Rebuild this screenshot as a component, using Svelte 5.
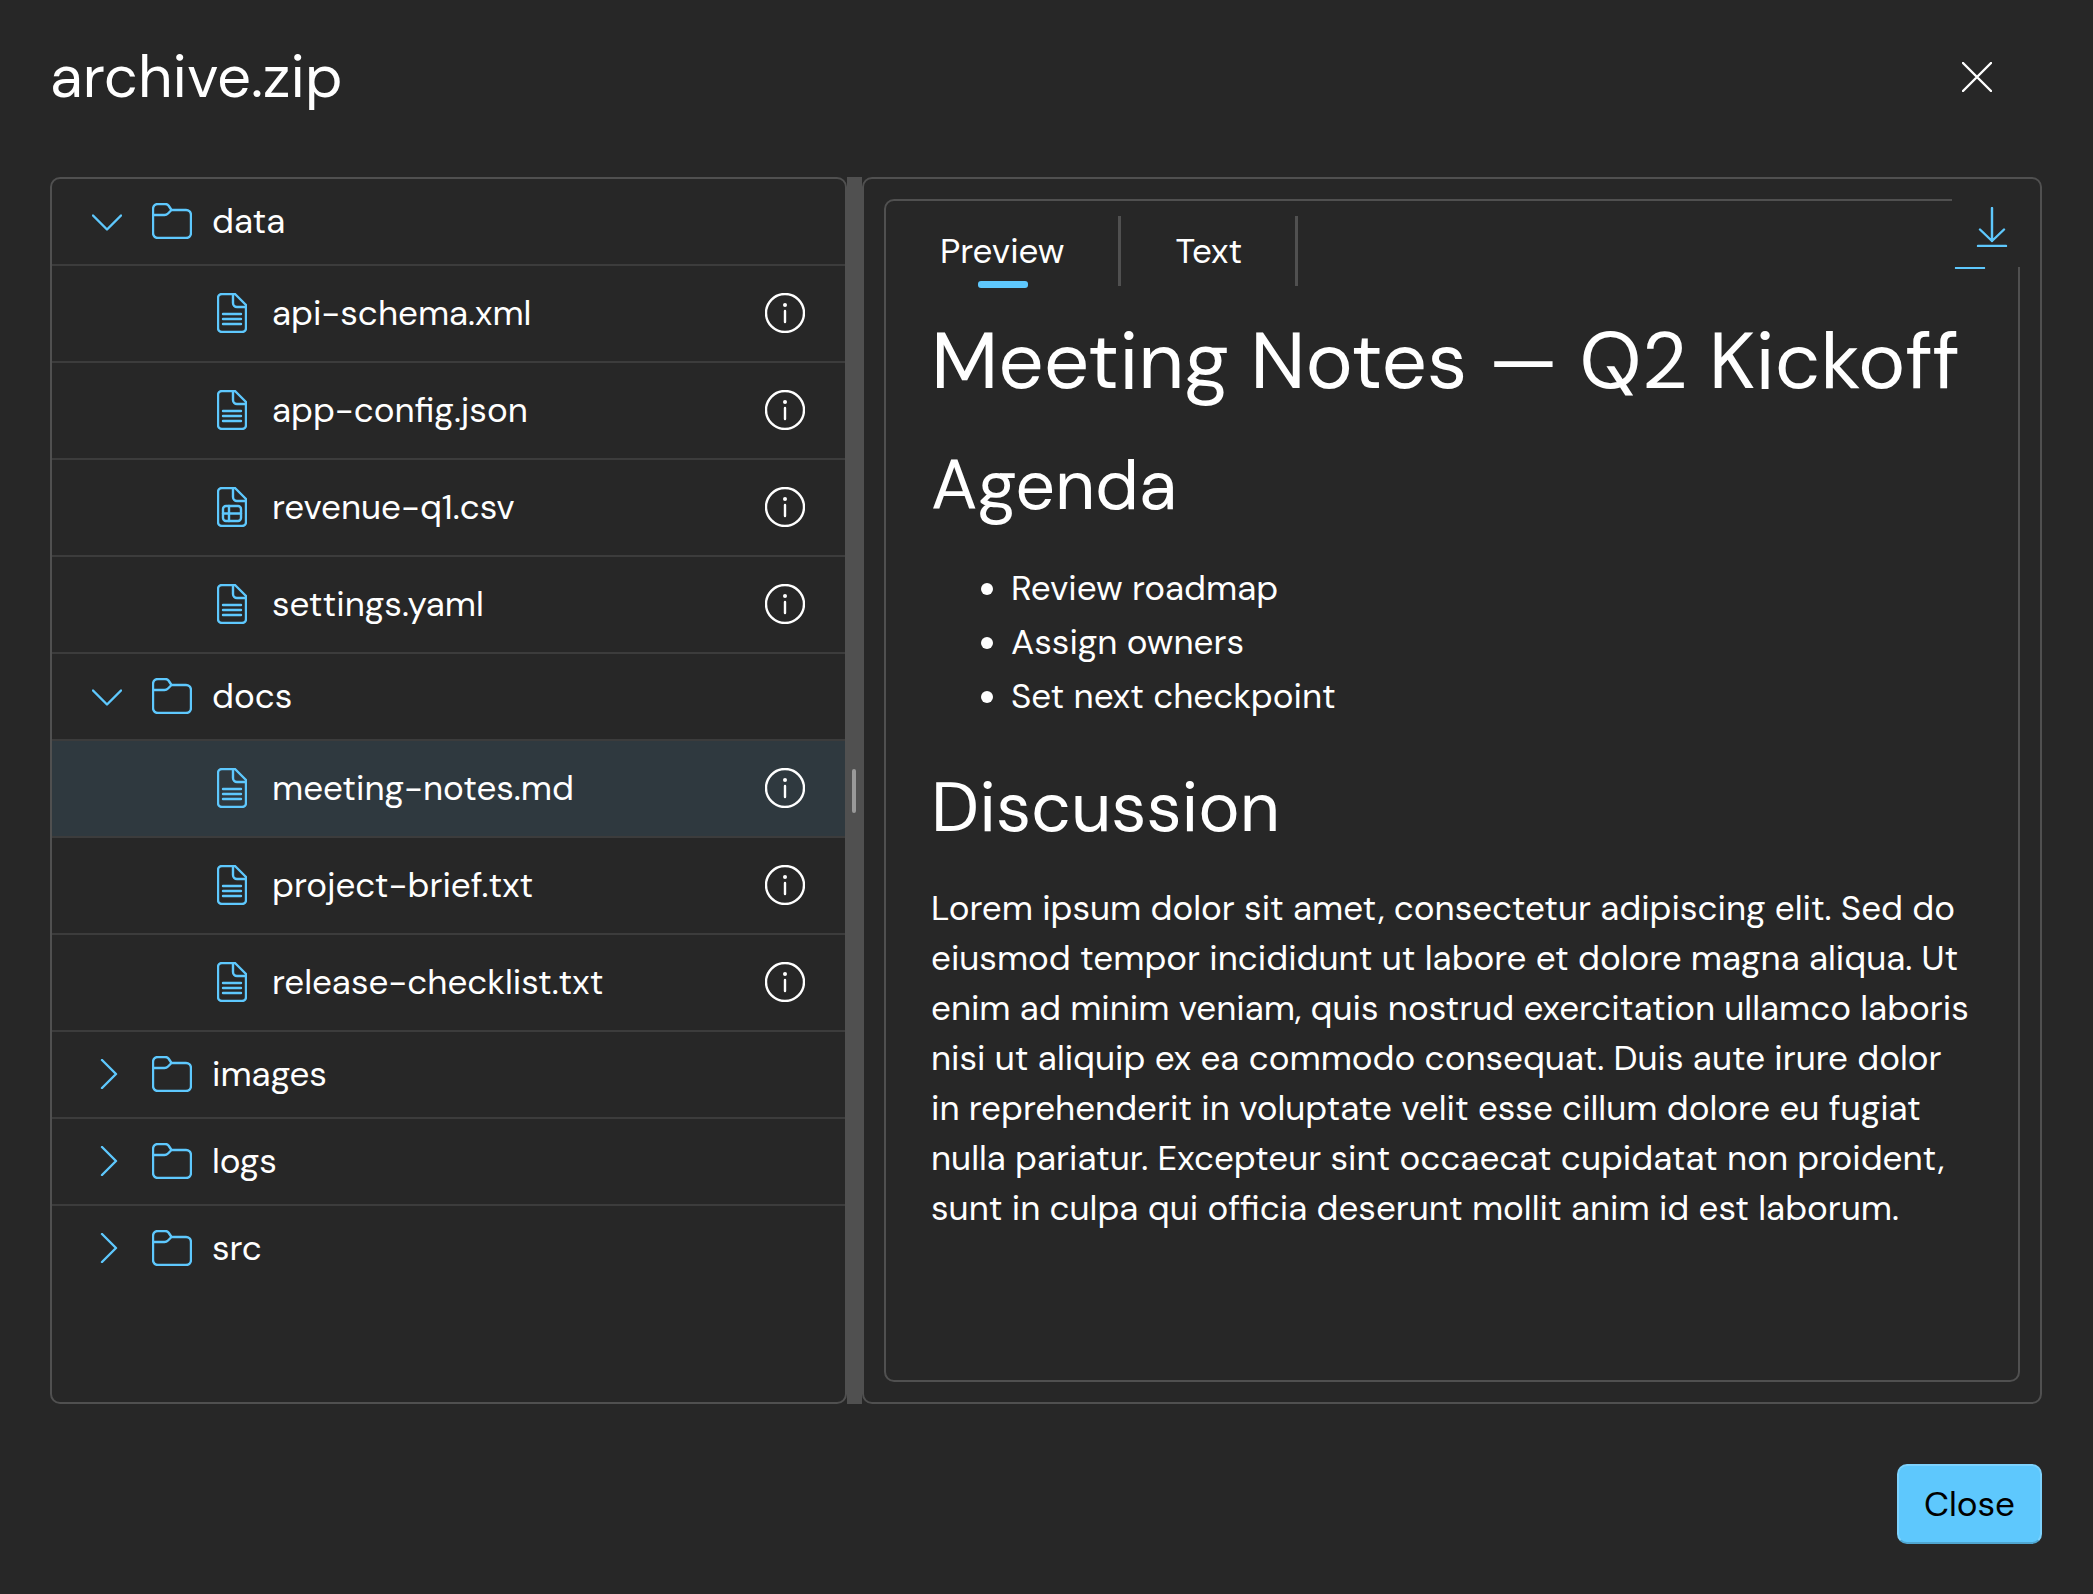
<script lang="ts">
  interface Entry {
    name: string;
    sheet?: boolean;
  }

  interface Folder {
    name: string;
    open: boolean;
    files: Entry[];
  }

  let folders: Folder[] = $state([
    {
      name: 'data',
      open: true,
      files: [
        { name: 'api-schema.xml' },
        { name: 'app-config.json' },
        { name: 'revenue-q1.csv', sheet: true },
        { name: 'settings.yaml' }
      ]
    },
    {
      name: 'docs',
      open: true,
      files: [
        { name: 'meeting-notes.md' },
        { name: 'project-brief.txt' },
        { name: 'release-checklist.txt' }
      ]
    },
    { name: 'images', open: false, files: [] },
    { name: 'logs', open: false, files: [] },
    { name: 'src', open: false, files: [] }
  ]);

  let selected = $state('meeting-notes.md');
  let tab = $state('Preview');
  const tabs = ['Preview', 'Text'];
</script>

<svelte:head>
  <title>archive.zip</title>
</svelte:head>

{#snippet downloadIcon()}
  <svg class="icon" width="40" height="40" viewBox="0 0 40 40" aria-hidden="true">
    <path d="M20 1V34M8 22.500L20 34L32 22.500M6 39H34" />
  </svg>
{/snippet}

<main class="dialog">
  <header>
    <h1 class="title">archive.zip</h1>
    <button class="dismiss" aria-label="Close dialog">
      <svg class="icon" width="30" height="30" viewBox="0 0 30 30" aria-hidden="true">
        <path d="M1 1L29 29M29 1L1 29" />
      </svg>
    </button>
  </header>

  <div class="split">
    <nav class="panel tree" aria-label="Archive contents">
      <ul>
        {#each folders as folder}
          <li>
            <button class="row folder" aria-expanded={folder.open} onclick={() => (folder.open = !folder.open)}>
              <svg class="icon" width="30" height="30" viewBox="0 0 30 30" aria-hidden="true">
                {#if folder.open}
                  <path d="M1 9.500L15 23.500L29 9.500" />
                {:else}
                  <path d="M10 1L24 15L10 29" />
                {/if}
              </svg>
              <svg class="icon" width="40" height="36" viewBox="0 0 40 36" aria-hidden="true">
                <path d="M1 12V6A5 5 0 0 1 6 1H13Q15 1 16.500 2.500L19.500 7H34A5 5 0 0 1 39 12V30A5 5 0 0 1 34 35H6A5 5 0 0 1 1 30V12H12.500Q14.500 12 16 10.500L19.500 7" />
              </svg>
              <span>{folder.name}</span>
            </button>
            {#if folder.open && folder.files.length}
              <ul>
                {#each folder.files as file}
                  <li class="row file" class:selected={selected === file.name}>
                    <button class="name" onclick={() => (selected = file.name)}>
                      <svg class="icon" width="30" height="40" viewBox="0 0 30 40" aria-hidden="true">
                        <path d="M18 1H5A4 4 0 0 0 1 5V35A4 4 0 0 0 5 39H25A4 4 0 0 0 29 35V12L18 1ZM16 1V10A4 4 0 0 0 20 14H29" />
                        {#if file.sheet}
                          <rect x="6" y="19" width="18" height="15" rx="3" />
                          <path d="M12 19V34M6 26.500H24" />
                        {:else}
                          <path d="M6 21H24M6 26H24M6 31H24" />
                        {/if}
                      </svg>
                      <span>{file.name}</span>
                    </button>
                    <button class="info" aria-label="Details of {file.name}">
                      <svg class="icon" width="40" height="40" viewBox="0 0 40 40" aria-hidden="true">
                        <circle cx="20" cy="20" r="19" />
                        <path d="M20 18V29" />
                        <circle class="dot" cx="20" cy="12" r="2" />
                      </svg>
                    </button>
                  </li>
                {/each}
              </ul>
            {/if}
          </li>
        {/each}
      </ul>
    </nav>

    <div class="splitter" role="separator" aria-orientation="vertical">
      <span class="grip"></span>
    </div>

    <section class="panel viewer">
      <div class="frame">
        <div class="tabs" role="tablist">
          {#each tabs as name}
            <button class="tab" class:active={tab === name} role="tab" aria-selected={tab === name} onclick={() => (tab = name)}>
              {name}
            </button>
          {/each}
        </div>
        <article>
          <h1>Meeting Notes — Q2 Kickoff</h1>
          <h2>Agenda</h2>
          <ul>
            <li>Review roadmap</li>
            <li>Assign owners</li>
            <li>Set next checkpoint</li>
          </ul>
          <h2>Discussion</h2>
          <p>
            Lorem ipsum dolor sit amet, consectetur adipiscing elit. Sed do eiusmod tempor incididunt ut labore et
            dolore magna aliqua. Ut enim ad minim veniam, quis nostrud exercitation ullamco laboris nisi ut aliquip
            ex ea commodo consequat. Duis aute irure dolor in reprehenderit in voluptate velit esse cillum dolore
            eu fugiat nulla pariatur. Excepteur sint occaecat cupidatat non proident, sunt in culpa qui officia
            deserunt mollit anim id est laborum.
          </p>
        </article>
      </div>
      <span class="under">{@render downloadIcon()}</span>
      <button class="download" aria-label="Download">{@render downloadIcon()}</button>
    </section>
  </div>

  <footer>
    <button class="close">Close</button>
  </footer>
</main>

<style>
  :global(body) {
    margin: 0;
    background: #272727;
  }
  .dialog {
    display: flex;
    flex-direction: column;
    box-sizing: border-box;
    min-height: 100vh;
    padding: 37px 51px 50px 50px;
    color: #fff;
    background: #272727;
    font-family: 'DM Sans', 'Open Sans', sans-serif;
    font-size: 35px;
    line-height: 50px;
  }
  button {
    margin: 0;
    padding: 0;
    border: none;
    background: none;
    color: inherit;
    font: inherit;
    cursor: pointer;
  }
  ul {
    margin: 0;
    padding: 0;
    list-style: none;
  }
  .icon {
    display: block;
    flex: none;
    fill: none;
    stroke: #5ec8fd;
    stroke-width: 2.4;
    stroke-linecap: round;
    stroke-linejoin: round;
  }

  header {
    display: flex;
    align-items: center;
    justify-content: space-between;
    height: 80px;
    margin-bottom: 60px;
    padding-right: 25px;
  }
  .title {
    margin: 0;
    font-size: 60px;
    font-weight: 400;
    line-height: 80px;
  }
  .dismiss,
  .info,
  .download {
    display: flex;
    align-items: center;
    justify-content: center;
    width: 80px;
    height: 80px;
  }
  .dismiss .icon,
  .info .icon {
    stroke: #fff;
  }

  .split {
    flex: 1;
    display: grid;
    grid-template-columns: 797fr 15px 1180fr;
  }
  .panel {
    box-sizing: border-box;
    min-width: 0;
    border: 2px solid #505050;
    border-radius: 10px;
  }

  .row {
    display: flex;
    align-items: center;
    box-sizing: border-box;
    width: 100%;
    padding-bottom: 1px;
    border-bottom: 2px solid #3c3c3c;
  }
  .folder {
    height: 87px;
    padding-left: 40px;
  }
  .folder .icon + .icon {
    margin: 0 20px 0 30px;
  }
  li:last-child > .folder {
    border-bottom-color: transparent;
  }
  .file {
    height: 97px;
    padding-right: 20px;
  }
  .selected {
    background: #2f393f;
  }
  .name {
    flex: 1;
    display: flex;
    align-items: center;
    gap: 25px;
    padding-left: 165px;
    text-align: left;
  }
  .info .dot {
    fill: #fff;
    stroke: none;
  }

  .splitter {
    display: flex;
    align-items: center;
    justify-content: center;
    padding-right: 1px;
    box-sizing: border-box;
    background: #505050;
  }
  .grip {
    width: 4px;
    height: 44px;
    border-radius: 2px;
    background: #999;
  }

  .viewer {
    position: relative;
    display: flex;
    padding: 20px;
  }
  .frame {
    flex: 1;
    min-width: 0;
    border: 2px solid #505050;
    border-radius: 10px;
  }
  .tabs {
    display: flex;
    gap: 2px;
    height: 70px;
    margin: 15px 0 25px 1px;
  }
  .tab {
    position: relative;
    padding: 0 53px;
    border-right: 3px solid #505050;
  }
  .tab.active::after {
    content: '';
    position: absolute;
    top: 65px;
    left: calc(50% - 24px);
    width: 50px;
    height: 7px;
    border-radius: 3px;
    background: #5ec8fd;
  }

  article {
    padding: 0 43px 0 45px;
  }
  article h1,
  article h2 {
    margin: 0 0 30px;
    font-weight: 400;
  }
  article h1 {
    font-size: 80px;
    line-height: 100px;
  }
  article h2 {
    font-size: 70px;
    line-height: 90px;
  }
  article ul {
    margin-bottom: 40px;
    padding-left: 80px;
    list-style: disc;
    line-height: 54px;
  }
  article p {
    margin: 0;
  }

  .under {
    position: absolute;
    top: 50px;
    right: 50px;
  }
  .download {
    position: absolute;
    top: 8px;
    right: 8px;
    background: #272727;
  }

  footer {
    display: flex;
    justify-content: flex-end;
    margin-top: 60px;
  }
  .close {
    box-sizing: border-box;
    height: 80px;
    padding: 0 25px;
    border: 2px solid #7dd2fd;
    border-bottom-color: #4fa6d1;
    border-radius: 10px;
    background: #5ec8fd;
    color: #000;
  }
</style>
